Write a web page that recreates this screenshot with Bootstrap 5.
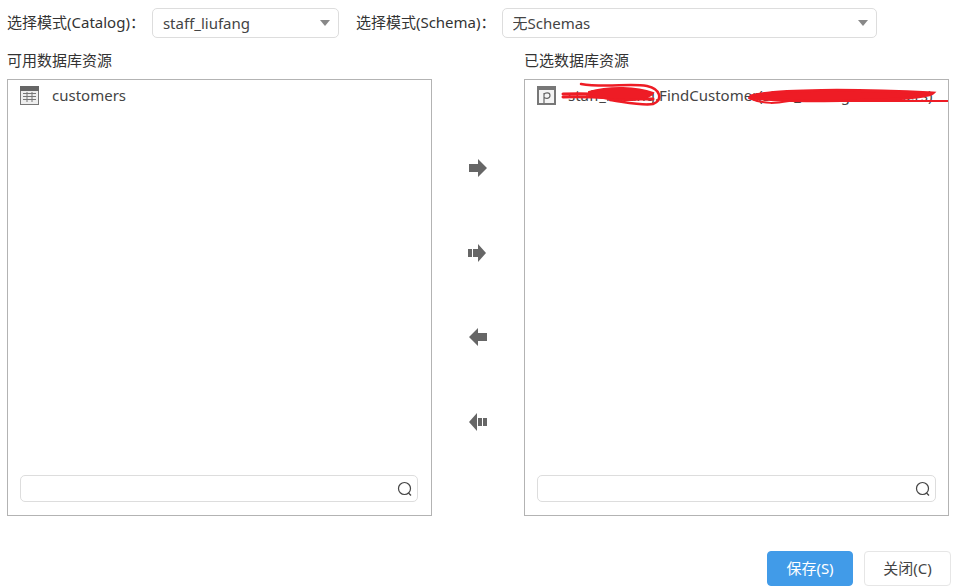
<!DOCTYPE html>
<html lang="zh">
<head>
<meta charset="utf-8">
<title>数据库资源</title>
<link href="https://cdn.jsdelivr.net/npm/bootstrap@5.3.0/dist/css/bootstrap.min.css" rel="stylesheet">
<style>
html,body{height:587px;overflow:hidden;background:#fff}
body{font-family:"Noto Sans","Noto Sans CJK SC",sans-serif;font-size:15px;color:#333;padding:8px 4px 1px 7px;display:flex;flex-direction:column}
.lbl{line-height:20px;white-space:nowrap}
.lbl-top{margin-top:-2px}
.pick{height:30px;font-size:15px;color:#444;border:1px solid #ddd;border-radius:5px;padding:0 30px 0 10px;background-size:10px 6px;background-position:right 8px center;flex:none;
 background-image:url("data:image/svg+xml,%3Csvg xmlns='http://www.w3.org/2000/svg' viewBox='0 0 10 6'%3E%3Cpath d='M0 0h10L5 6z' fill='%23888'/%3E%3C/svg%3E")}
.pick-a{width:187px;margin-left:7px}
.pick-b{width:375px;margin-left:6px}
.lbl-b{margin-left:17px}
.head-row{height:20px;margin-top:12px}
.head-l{width:517px}
.stage{margin-top:9px;height:437px;flex:none}
.pane{width:425px;border:1px solid #b3b3b3;padding:5px 12px 13px;position:relative;overflow:hidden}
.entry{height:20px;line-height:20px;gap:13px;white-space:nowrap;overflow:hidden;color:#444}
.entry svg{margin-top:1px}
.entry-wide{gap:12px}
.finder{height:27px;border:1px solid #ddd;border-radius:5px;padding-right:4px;margin-top:auto;flex:none}
.finder-l{width:398px}
.finder-r{width:399px}
.finder input{border:0;outline:0;min-width:0;flex:1;background:transparent}
.mid{width:92px;padding-top:80px}
.mover{height:20px;flex:none;display:flex;justify-content:center;margin-bottom:64.67px}
.mover svg{display:block}
.scribble{position:absolute;left:0;top:0;pointer-events:none}
.foot{margin-top:35px;height:35px;gap:11px;flex:none}
.act{height:35px;font-size:15px;border-radius:4px;line-height:1;padding:0;width:86px}
.act-save{background:#419be8;border:1px solid #419be8;color:#fff}
.act-close{background:#fff;border:1px solid #e6e6e6;color:#444;width:87px}
</style>
</head>
<body>
<div class="d-flex align-items-center">
  <span class="lbl lbl-top">选择模式(Catalog)：</span>
  <select class="form-select pick pick-a"><option>staff_liufang</option></select>
  <span class="lbl lbl-top lbl-b">选择模式(Schema)：</span>
  <select class="form-select pick pick-b"><option>无Schemas</option></select>
</div>
<div class="d-flex head-row">
  <div class="lbl head-l">可用数据库资源</div>
  <div class="lbl">已选数据库资源</div>
</div>
<div class="d-flex stage">
  <div class="pane d-flex flex-column">
    <div class="entry d-flex align-items-center">
      <svg width="19" height="19" viewBox="0 0 19 19" class="flex-shrink-0"><rect x=".5" y=".5" width="18" height="18" fill="#eee" stroke="#777"/><rect width="19" height="5" fill="#666"/><path d="M3 7.5h13M3 10.5h13M3 13.500h13M7 6v10M12 6v10" stroke="#777" fill="none"/></svg>
      <span>customers</span>
    </div>
    <div class="finder finder-l d-flex align-items-center">
      <input type="text" aria-label="搜索">
      <svg width="16" height="16" viewBox="0 0 16 16"><circle cx="7.500" cy="7.500" r="6" fill="none" stroke="#444" stroke-width="1.200"/><path d="M11.500 12l2.500 2.500" stroke="#444" stroke-width="1.200"/></svg>
    </div>
  </div>
  <div class="mid d-flex flex-column">
    <div class="mover"><svg width="20" height="20" viewBox="0 0 20 20"><path d="M1 5h9V0l9 9-9 9v-5H1z" fill="#666"/></svg></div>
    <div class="mover"><svg width="20" height="20" viewBox="0 0 20 20"><path d="M0 5h4v8H0zM5 5h5v8H5zM10 0l8 9-8 9z" fill="#666"/></svg></div>
    <div class="mover"><svg width="20" height="20" viewBox="0 0 20 20"><path d="M19 5h-9V0L1 9l9 9v-5h9z" fill="#666"/></svg></div>
    <div class="mover"><svg width="20" height="20" viewBox="0 0 20 20"><path d="M9 0L1 9l8 9zM10 5h4v8h-4zM15 5h4v8h-4z" fill="#666"/></svg></div>
  </div>
  <div class="pane d-flex flex-column">
    <div class="entry entry-wide d-flex align-items-center">
      <svg width="19" height="19" viewBox="0 0 19 19" class="flex-shrink-0"><rect x="1" y="1" width="17" height="17" fill="#f4f4f4" stroke="#777" stroke-width="2"/><rect x="1" y="1" width="17" height="3" fill="#777"/><path d="M7 17V7M7 8.500c1-2 6-2.500 6 1s-5 3.500-6 1.500" fill="none" stroke="#666" stroke-width="1.200"/></svg>
      <span>staff_liufang.FindCustomer(staff_liufang.customers)</span>
    </div>
    <div class="finder finder-r d-flex align-items-center">
      <input type="text" aria-label="搜索">
      <svg width="16" height="16" viewBox="0 0 16 16"><circle cx="7.500" cy="7.500" r="6" fill="none" stroke="#444" stroke-width="1.200"/><path d="M11.500 12l2.500 2.500" stroke="#444" stroke-width="1.200"/></svg>
    </div>
    <svg class="scribble" width="425" height="40" viewBox="0 0 425 40" fill="none" stroke="#ee1c25" stroke-linecap="round">
      <path d="M38 14C70 13 100 15 122 16" stroke-width="3"/>
      <path d="M38 17C75 16 105 20 128 19" stroke-width="3"/>
      <path d="M56 4C80 8 105 3 122 6C136 9 138 20 128 24C118 26 100 22 85 20" stroke-width="2.500"/>
      <path d="M64 12C85 6 112 7 128 13C122 22 90 22 64 15z" fill="#ee1c25" stroke-width="2"/>
      <path d="M226 16C250 9 330 9 408 13C400 21 280 23 226 18z" fill="#ee1c25" stroke-width="3"/>
      <path d="M224 18C240 25 252 23 264 21" stroke-width="2"/>
      <path d="M300 21C340 21 390 21 424 21" stroke-width="2"/>
    </svg>
  </div>
</div>
<div class="d-flex justify-content-end foot">
  <button type="button" class="btn act act-save">保存(S)</button>
  <button type="button" class="btn act act-close">关闭(C)</button>
</div>
</body>
</html>
